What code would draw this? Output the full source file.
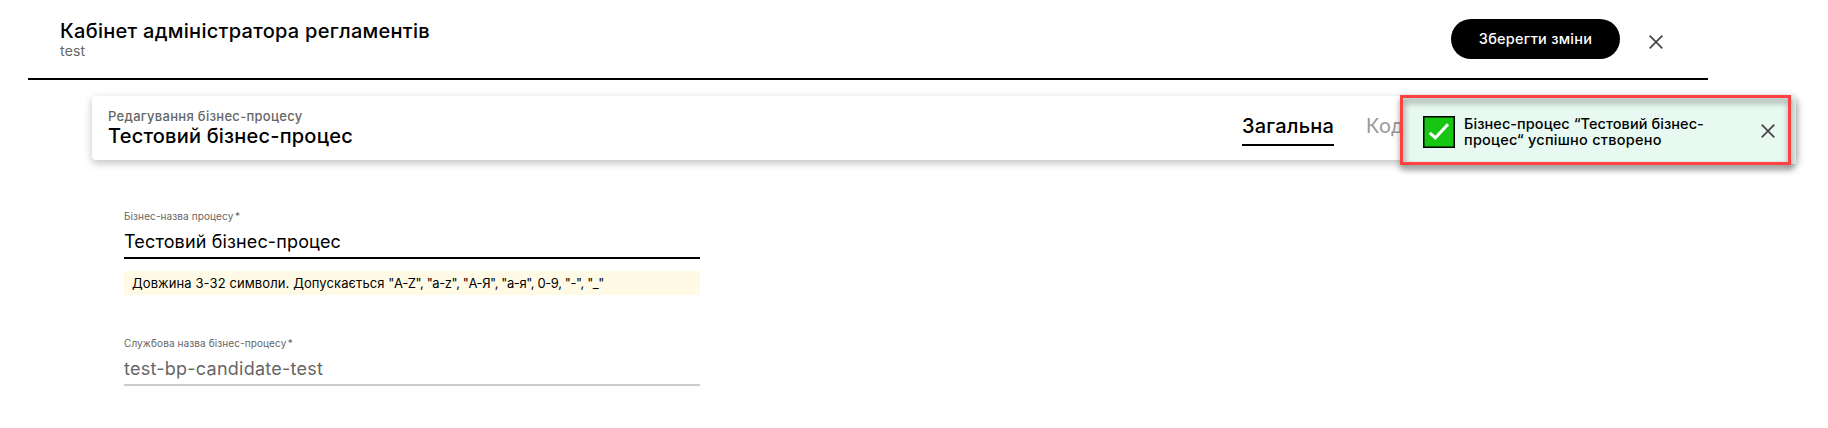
<template>
  <main class="page">
    <header class="top">
      <div class="who">
        <h1>Кабінет адміністратора регламентів</h1>
        <p>test</p>
      </div>
      <button class="save" type="button">Зберегти зміни</button>
      <svg class="x" viewBox="0 0 14 14"><path d="M.7.7l12.6 12.6M13.3.7L.7 13.3" /></svg>
    </header>

    <section class="card">
      <div class="name">
        <p>Редагування бізнес-процесу</p>
        <h2>Тестовий бізнес-процес</h2>
      </div>
      <nav>
        <a class="on">Загальна</a>
        <a>Код</a>
      </nav>
    </section>

    <form class="form">
      <label>Бізнес-назва процесу<i>*</i></label>
      <div class="field">Тестовий бізнес-процес</div>
      <p class="hint">Довжина 3-32 символи. Допускається <span>"A-Z", "a-z", "А-Я", "а-я", 0-9, "-", "_"</span></p>
      <label class="second">Службова назва бізнес-процесу<i>*</i></label>
      <div class="field off">test-bp-candidate-test</div>
    </form>

    <aside class="toast">
      <svg class="ok" viewBox="0 0 32 32">
        <rect x=".75" y=".75" width="30.5" height="30.5" />
        <path d="M6.8 16.8l5.6 5L25 8.3" />
      </svg>
      <p>Бізнес-процес “Тестовий бізнес-<br><span>процес“ успішно створено</span></p>
      <svg class="x" viewBox="0 0 14 14"><path d="M.7.7l12.6 12.6M13.3.7L.7 13.3" /></svg>
    </aside>
    <div class="frame"></div>
  </main>
</template>

<style>
body { background: #fff; }
</style>

<style scoped>
.page { position: relative; width: 1828px; height: 428px; overflow: hidden; background: #fff; color: #000; font-family: Inter, "Noto Sans", sans-serif; }
h1, h2, p { margin: 0; font-weight: 500; }
.top { display: flex; align-items: flex-start; box-sizing: border-box; height: 80px; width: 1680px; margin-left: 28px; padding: 19px 45px 0 32px; border-bottom: 2px solid #000; }
.who { flex: 1; }
h1 { font-size: 20px; line-height: 24px; letter-spacing: .28px; }
.who p { font-size: 14px; line-height: 16px; color: #666; font-weight: 400; letter-spacing: .2px; }
.save { width: 169px; height: 40px; padding: 0; border: 0; border-radius: 20px; background: #000; color: #fff; font: 500 14.5px/40px Inter, "Noto Sans", sans-serif; letter-spacing: .25px; margin-right: 29px; }
.x { width: 14px; height: 14px; margin-top: 16px; fill: none; stroke: #444; stroke-width: 1.7; }
.card { display: flex; justify-content: space-between; box-sizing: border-box; width: 1704px; height: 64px; margin: 16px 0 0 92px; padding: 12px 16px; border-radius: 4px; box-shadow: 0 3px 8px rgba(0, 0, 0, .25); }
.name p { font-size: 13px; line-height: 16px; color: #666; letter-spacing: .3px; }
h2 { font-size: 20px; line-height: 24px; letter-spacing: .2px; }
nav { display: flex; gap: 32px; width: 538px; font-size: 20px; letter-spacing: .2px; }
nav a { box-sizing: border-box; height: 38px; padding-top: 4px; line-height: 28px; color: #999; }
nav .on { color: #000; font-weight: 500; border-bottom: 2px solid; }
.form { width: 576px; margin: 48px 0 0 124px; }
label { display: block; font-size: 10px; line-height: 16px; letter-spacing: .1px; color: #666; }
label i { font-style: normal; margin-left: 1.5px; }
.field { height: 33px; line-height: 35px; font-size: 18px; letter-spacing: .14px; border-bottom: 2px solid #000; }
.hint { margin-top: 12px; padding-left: 8px; background: #fffae6; font-size: 13px; line-height: 24px; letter-spacing: .1px; font-weight: 400; }
.hint span { letter-spacing: -.4px; }
.second { margin-top: 40px; }
.off { color: #666; border-color: #ccc; letter-spacing: .25px; }
.toast { position: absolute; left: 1403px; top: 98px; display: flex; align-items: flex-start; box-sizing: border-box; width: 393px; height: 66px; padding: 18px 21px 0 20px; background: #e7f9f1; box-shadow: 0 3px 8px rgba(0, 0, 0, .25); }
.toast p { flex: 1; margin-left: 9px; font-size: 14.5px; line-height: 16px; letter-spacing: .07px; }
.toast span { letter-spacing: .25px; }
.toast .x { margin-top: 8px; }
.ok { width: 32px; height: 32px; fill: #17c613; stroke: #000; stroke-width: 1.5; }
.ok path { fill: none; stroke: #fff; stroke-width: 3; }
.frame { position: absolute; left: 1400px; top: 95px; box-sizing: border-box; width: 391px; height: 70px; border: 3px solid #ff4141; filter: drop-shadow(1px 4px 3px rgba(0, 0, 0, .5)); }
</style>
